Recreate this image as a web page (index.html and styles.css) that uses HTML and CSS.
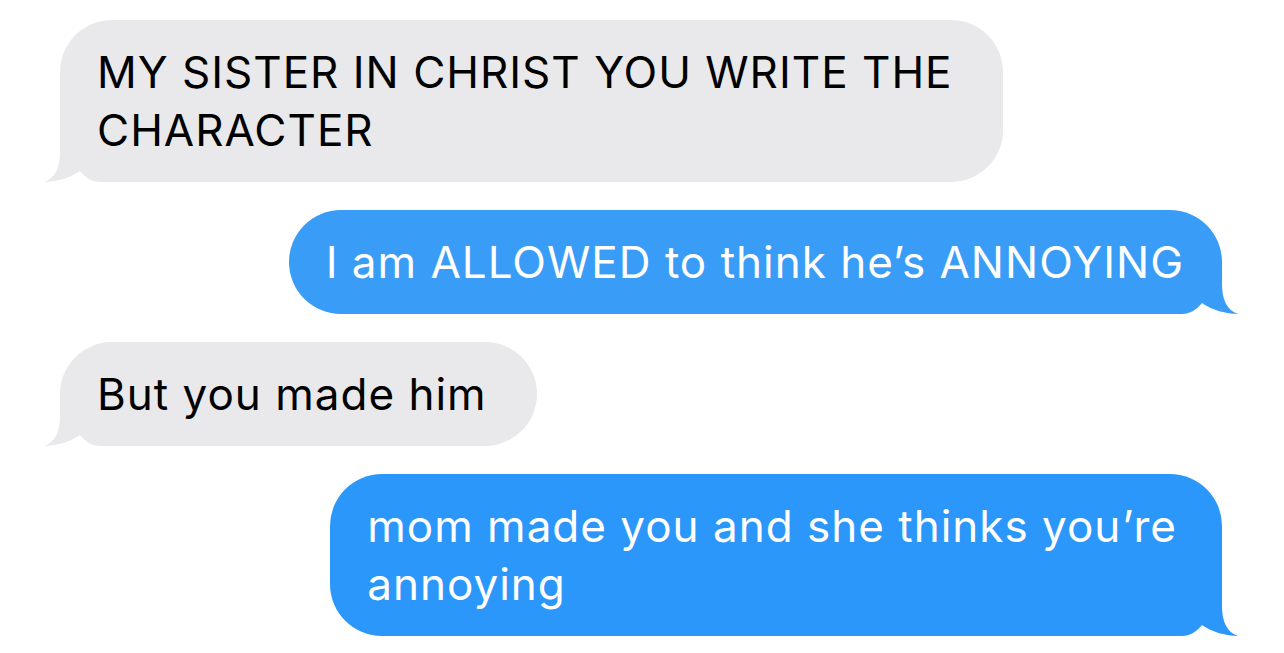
FILE: index.html
```html
<!DOCTYPE html>
<html lang="en">
<head>
	<meta charset="UTF-8">
	<title>Messages</title>
	<link rel="stylesheet" href="styles.css">
</head>
<body>
	<div class="thread">
		<div class="bubble them">
			<span class="text">MY SISTER IN CHRIST YOU WRITE THE<br>CHARACTER</span>
			<svg class="tail" viewBox="0 0 72 54" aria-hidden="true"><path d="M0,0 L54,0 L54,24 C54,40 59,50 70,54 C58,54 44,50 34,43 C28,50 22,54 14,54 L0,54 Z"/></svg>
		</div>

		<div class="bubble me light">
			<span class="text">I am ALLOWED to think he’s ANNOYING</span>
			<svg class="tail" viewBox="0 0 72 54" aria-hidden="true"><path d="M0,0 L54,0 L54,24 C54,40 59,50 70,54 C58,54 44,50 34,43 C28,50 22,54 14,54 L0,54 Z"/></svg>
		</div>

		<div class="bubble them">
			<span class="text">But you made him</span>
			<svg class="tail" viewBox="0 0 72 54" aria-hidden="true"><path d="M0,0 L54,0 L54,24 C54,40 59,50 70,54 C58,54 44,50 34,43 C28,50 22,54 14,54 L0,54 Z"/></svg>
		</div>

		<div class="bubble me">
			<span class="text">mom made you and she thinks you’re<br>annoying</span>
			<svg class="tail" viewBox="0 0 72 54" aria-hidden="true"><path d="M0,0 L54,0 L54,24 C54,40 59,50 70,54 C58,54 44,50 34,43 C28,50 22,54 14,54 L0,54 Z"/></svg>
		</div>
	</div>
</body>
</html>
```

FILE: styles.css
```css
html, body{
	margin: 0;
	background: #fff;
}

.thread{
	display: flex;
	flex-direction: column;
	gap: 28px;
	padding: 20px 62px 0 60px;
	font-family: Inter, "Noto Sans", "Liberation Sans", sans-serif;
}

.bubble{
	position: relative;
	padding: 23px 45px 23px 37px;
	border-radius: 52px;
	font-size: 44px;
	line-height: 58px;
	letter-spacing: 1px;
}

.bubble .text{
	position: relative;
	z-index: 1;
}

.bubble .tail{
	position: absolute;
	bottom: 0;
	width: 72px;
	height: 54px;
}

/* grey, received */
.them{
	align-self: flex-start;
	padding-right: 50px;
	background: #e9e9eb;
	color: #000;
}
.them .tail{
	left: -18px;
	transform: scaleX(-1);
	fill: #e9e9eb;
}

/* blue, sent */
.me{
	align-self: flex-end;
	background: #2b97fb;
	color: #fff;
}
.me.light{
	background: #399df7;
	padding-right: 38px;
}
.me .tail{
	right: -18px;
	fill: #2b97fb;
}
.me.light .tail{
	fill: #399df7;
}
```
